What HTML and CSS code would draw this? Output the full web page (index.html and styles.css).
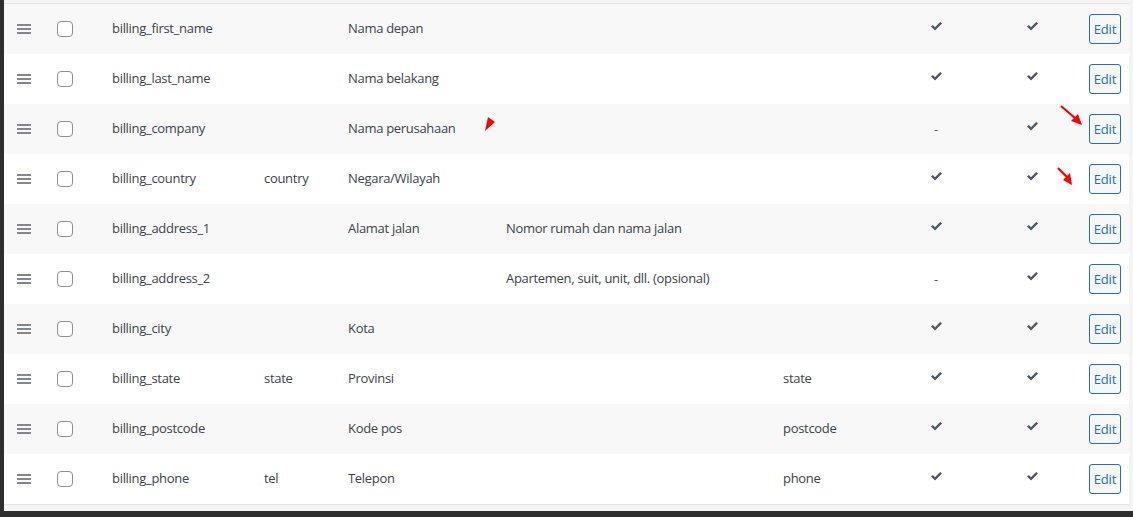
FILE: index.html
```html
<!DOCTYPE html>
<html>
<head>
<meta charset="utf-8">
<link rel="stylesheet" href="styles.css">
</head>
<body>
<div class="frame">
  <div class="table">
    <div class="row alt">
      <span class="handle"><i></i><i></i><i></i></span><span class="cb"><b></b></span>
      <span class="t">billing_first_name</span><span></span><span class="t">Nama depan</span><span></span><span></span>
      <span class="c"><svg class="chk" viewBox="0 0 11 9"><path d="M0 4.5 L1.8 3 L4 5.2 L9.2 0 L11 1.6 L4 8.6 Z"/></svg></span>
      <span class="c"><svg class="chk" viewBox="0 0 11 9"><path d="M0 4.5 L1.8 3 L4 5.2 L9.2 0 L11 1.6 L4 8.6 Z"/></svg></span>
      <span class="act"><button class="btn">Edit</button></span>
    </div>
    <div class="row">
      <span class="handle"><i></i><i></i><i></i></span><span class="cb"><b></b></span>
      <span class="t">billing_last_name</span><span></span><span class="t">Nama belakang</span><span></span><span></span>
      <span class="c"><svg class="chk" viewBox="0 0 11 9"><path d="M0 4.5 L1.8 3 L4 5.2 L9.2 0 L11 1.6 L4 8.6 Z"/></svg></span>
      <span class="c"><svg class="chk" viewBox="0 0 11 9"><path d="M0 4.5 L1.8 3 L4 5.2 L9.2 0 L11 1.6 L4 8.6 Z"/></svg></span>
      <span class="act"><button class="btn">Edit</button></span>
    </div>
    <div class="row alt">
      <span class="handle"><i></i><i></i><i></i></span><span class="cb"><b></b></span>
      <span class="t">billing_company</span><span></span><span class="t">Nama perusahaan</span><span></span><span></span>
      <span class="c dash">-</span>
      <span class="c"><svg class="chk" viewBox="0 0 11 9"><path d="M0 4.5 L1.8 3 L4 5.2 L9.2 0 L11 1.6 L4 8.6 Z"/></svg></span>
      <span class="act"><button class="btn">Edit</button></span>
    </div>
    <div class="row">
      <span class="handle"><i></i><i></i><i></i></span><span class="cb"><b></b></span>
      <span class="t">billing_country</span><span class="t">country</span><span class="t">Negara/Wilayah</span><span></span><span></span>
      <span class="c"><svg class="chk" viewBox="0 0 11 9"><path d="M0 4.5 L1.8 3 L4 5.2 L9.2 0 L11 1.6 L4 8.6 Z"/></svg></span>
      <span class="c"><svg class="chk" viewBox="0 0 11 9"><path d="M0 4.5 L1.8 3 L4 5.2 L9.2 0 L11 1.6 L4 8.6 Z"/></svg></span>
      <span class="act"><button class="btn">Edit</button></span>
    </div>
    <div class="row alt">
      <span class="handle"><i></i><i></i><i></i></span><span class="cb"><b></b></span>
      <span class="t">billing_address_1</span><span></span><span class="t">Alamat jalan</span><span class="t">Nomor rumah dan nama jalan</span><span></span>
      <span class="c"><svg class="chk" viewBox="0 0 11 9"><path d="M0 4.5 L1.8 3 L4 5.2 L9.2 0 L11 1.6 L4 8.6 Z"/></svg></span>
      <span class="c"><svg class="chk" viewBox="0 0 11 9"><path d="M0 4.5 L1.8 3 L4 5.2 L9.2 0 L11 1.6 L4 8.6 Z"/></svg></span>
      <span class="act"><button class="btn">Edit</button></span>
    </div>
    <div class="row">
      <span class="handle"><i></i><i></i><i></i></span><span class="cb"><b></b></span>
      <span class="t">billing_address_2</span><span></span><span></span><span class="t">Apartemen, suit, unit, dll. (opsional)</span><span></span>
      <span class="c dash">-</span>
      <span class="c"><svg class="chk" viewBox="0 0 11 9"><path d="M0 4.5 L1.8 3 L4 5.2 L9.2 0 L11 1.6 L4 8.6 Z"/></svg></span>
      <span class="act"><button class="btn">Edit</button></span>
    </div>
    <div class="row alt">
      <span class="handle"><i></i><i></i><i></i></span><span class="cb"><b></b></span>
      <span class="t">billing_city</span><span></span><span class="t">Kota</span><span></span><span></span>
      <span class="c"><svg class="chk" viewBox="0 0 11 9"><path d="M0 4.5 L1.8 3 L4 5.2 L9.2 0 L11 1.6 L4 8.6 Z"/></svg></span>
      <span class="c"><svg class="chk" viewBox="0 0 11 9"><path d="M0 4.5 L1.8 3 L4 5.2 L9.2 0 L11 1.6 L4 8.6 Z"/></svg></span>
      <span class="act"><button class="btn">Edit</button></span>
    </div>
    <div class="row">
      <span class="handle"><i></i><i></i><i></i></span><span class="cb"><b></b></span>
      <span class="t">billing_state</span><span class="t">state</span><span class="t">Provinsi</span><span></span><span class="t">state</span>
      <span class="c"><svg class="chk" viewBox="0 0 11 9"><path d="M0 4.5 L1.8 3 L4 5.2 L9.2 0 L11 1.6 L4 8.6 Z"/></svg></span>
      <span class="c"><svg class="chk" viewBox="0 0 11 9"><path d="M0 4.5 L1.8 3 L4 5.2 L9.2 0 L11 1.6 L4 8.6 Z"/></svg></span>
      <span class="act"><button class="btn">Edit</button></span>
    </div>
    <div class="row alt">
      <span class="handle"><i></i><i></i><i></i></span><span class="cb"><b></b></span>
      <span class="t">billing_postcode</span><span></span><span class="t">Kode pos</span><span></span><span class="t">postcode</span>
      <span class="c"><svg class="chk" viewBox="0 0 11 9"><path d="M0 4.5 L1.8 3 L4 5.2 L9.2 0 L11 1.6 L4 8.6 Z"/></svg></span>
      <span class="c"><svg class="chk" viewBox="0 0 11 9"><path d="M0 4.5 L1.8 3 L4 5.2 L9.2 0 L11 1.6 L4 8.6 Z"/></svg></span>
      <span class="act"><button class="btn">Edit</button></span>
    </div>
    <div class="row">
      <span class="handle"><i></i><i></i><i></i></span><span class="cb"><b></b></span>
      <span class="t">billing_phone</span><span class="t">tel</span><span class="t">Telepon</span><span></span><span class="t">phone</span>
      <span class="c"><svg class="chk" viewBox="0 0 11 9"><path d="M0 4.5 L1.8 3 L4 5.2 L9.2 0 L11 1.6 L4 8.6 Z"/></svg></span>
      <span class="c"><svg class="chk" viewBox="0 0 11 9"><path d="M0 4.5 L1.8 3 L4 5.2 L9.2 0 L11 1.6 L4 8.6 Z"/></svg></span>
      <span class="act"><button class="btn">Edit</button></span>
    </div>
  </div>
  <svg class="annot" width="1133" height="517" viewBox="0 0 1133 517">
    <polygon points="485,131 488,117 495,122" fill="#ff0000"/>
    <line x1="1061" y1="106" x2="1075" y2="118" stroke="#ff0000" stroke-width="2.2"/>
    <polygon points="1082,125 1071,121 1078,114" fill="#ff0000"/>
    <line x1="1058" y1="168" x2="1067" y2="177" stroke="#ff0000" stroke-width="2.2"/>
    <polygon points="1072,185 1063,180 1070,173" fill="#ff0000"/>
  </svg>
</div>
</body>
</html>
```

FILE: styles.css
```css
html, body {
  margin: 0;
  padding: 0;
  background: #f3f3f3;
}
body {
  width: 1133px;
  height: 517px;
  overflow: hidden;
}
.frame {
  position: relative;
  box-sizing: border-box;
  width: 1133px;
  height: 517px;
  background: #f4f4f4;
  border-left: 4px solid #2e2e2e;
  border-bottom: 6px solid #2e2e2e;
  padding-top: 3px;
  font-family: "Open Sans", "Segoe UI", sans-serif;
  font-size: 13px;
  color: #3c434a;
}
.table {
  width: 1125px;
  border-top: 1px solid #e2e4e7;
  border-bottom: 1px solid #e2e4e7;
}
.row {
  display: grid;
  grid-template-columns: 40px 55px 152px 84px 158px 277px 103px 100px 92px 51px;
  align-items: center;
  height: 50px;
  padding-left: 13px;
  background: #ffffff;
}
.row.alt {
  background: #f8f8f8;
}
.row > span {
  white-space: nowrap;
}
.t {
  letter-spacing: -0.3px;
  margin-top: -2px;
}
.handle {
  display: flex;
  flex-direction: column;
  gap: 2px;
  width: 14px;
}
.handle i {
  display: block;
  height: 2px;
  background: #82878c;
}
.cb b {
  display: block;
  width: 14px;
  height: 14px;
  border: 1px solid #8c8f94;
  border-radius: 4px;
  background: #fff;
}
.c {
  display: flex;
  justify-content: center;
  margin-top: -5px;
}
.dash {
  margin-top: -1px;
  color: #50575e;
}
.chk {
  width: 11px;
  height: 9px;
  fill: #50575e;
}
.act {
  padding-left: 11px;
}
.btn {
  box-sizing: border-box;
  width: 32px;
  height: 30px;
  padding: 0;
  border: 1px solid #2271b1;
  border-radius: 3px;
  background: #f6f7f7;
  color: #2271b1;
  font-family: "Open Sans", "Segoe UI", sans-serif;
  font-size: 13px;
  letter-spacing: -0.2px;
  line-height: 28px;
  text-align: center;
}
.annot {
  position: absolute;
  left: -4px;
  top: 0;
  pointer-events: none;
}
```
